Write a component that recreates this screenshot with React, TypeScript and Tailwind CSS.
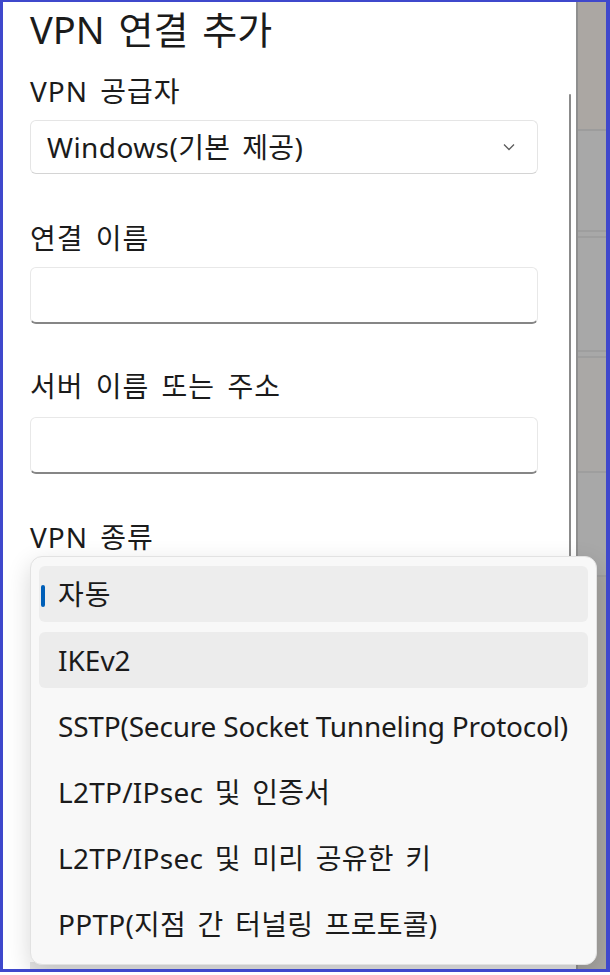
const options = [
  { text: 'IKEv2', track: '' },
  { text: 'SSTP(Secure Socket Tunneling Protocol)', track: 'tracking-[-0.2px] [word-spacing:0px]' },
  { text: 'L2TP/IPsec 및 인증서', track: 'tracking-[0.25px]' },
  { text: 'L2TP/IPsec 및 미리 공유한 키', track: 'tracking-[0.25px]' },
  { text: 'PPTP(지점 간 터널링 프로토콜)', track: 'tracking-[0.25px]' },
];

function Label({ children, className }: { children: React.ReactNode; className: string }) {
  return (
    <div className={`flex h-[38px] items-center text-[28px] tracking-[1px] [word-spacing:4px] text-[#1b1b1b] ${className}`}>
      {children}
    </div>
  );
}

function TextBox({ className }: { className: string }) {
  return (
    <div className={`h-[57px] w-[508px] rounded-[6px] border border-[#e8e8e8] border-b-2 border-b-[#868686] bg-white ${className}`} />
  );
}

export default function App() {
  return (
    <div className="h-[975px] w-[610px] bg-white [font-family:'Noto_Sans','Noto_Sans_CJK_KR',sans-serif] [word-spacing:4px]">
      <div className="relative flex h-[972px] w-[610px] overflow-hidden border-[#3f48cc] border-t-2 border-l-[3px] border-r-4 border-b-[3px]">
        {/* dialog page */}
        <div className="relative flex flex-1 flex-col bg-white pl-[27px]">
          <div className="flex h-[54px] items-center text-[38px] text-[#1b1b1b]">VPN 연결 추가</div>

          <Label className="mt-[16px]">VPN 공급자</Label>
          <div className="mt-[10px] flex h-[54px] w-[508px] items-center justify-between rounded-[6px] border border-[#e5e5e5] border-b-[#d4d4d4] bg-white pl-[16px] pr-[22px] text-[28px] tracking-[0.4px] text-[#1b1b1b]">
            <span>Windows(기본 제공)</span>
            <svg width="12" height="8" viewBox="0 0 12 8" fill="none">
              <path d="M1 1.5 6 6.5 11 1.5" stroke="#5c5c5c" strokeWidth="1.3" />
            </svg>
          </div>

          <Label className="mt-[45px]">연결 이름</Label>
          <TextBox className="mt-[10px]" />

          <Label className="mt-[43px]">서버 이름 또는 주소</Label>
          <TextBox className="mt-[12px]" />

          <Label className="mt-[44px]">VPN 종류</Label>
          <div className="mt-[10px] h-[54px] w-[508px] rounded-[6px] border border-[#e5e5e5] bg-white" />
          <div className="mt-[72px] h-[54px] w-[508px] rounded-[6px] border border-[#e5e5e5] bg-white" />
          <div className="mt-[90px] h-[57px] w-[508px] rounded-[6px] border border-[#e5e5e5] bg-white" />

          <div className="mt-auto h-[7px] w-full bg-[#e6e6e6]" />

          {/* scrollbar */}
          <div className="absolute right-[5px] top-[92px] h-[520px] w-[2px] rounded-full bg-[#8b8b8b]" />
        </div>

        {/* dimmed window behind */}
        <div className="flex w-[30px] flex-col border-l-2 border-[#8f8f8f] bg-[#a8a8a8]">
          <div className="h-[129px] border-b-2 border-[#9c9c9c] bg-[#aba7a3]" />
          <div className="h-[101px] border-b-2 border-[#9e9e9e]" />
          <div className="h-[6px] border-b-2 border-[#9e9e9e]" />
          <div className="h-[114px] border-b-2 border-[#9e9e9e]" />
          <div className="h-[6px] border-b-2 border-[#9e9e9e]" />
          <div className="h-[115px] border-b-2 border-[#9e9e9e] bg-[#aaa8a6]" />
          <div className="h-[104px] border-b-2 border-[#9e9e9e]" />
          <div className="flex-1 bg-[#a7a5a2]" />
        </div>

        {/* VPN type dropdown */}
        <div className="absolute left-[27px] top-[554px] w-[567px] rounded-[12px] border border-[#e2e2e2] bg-[#f8f8f8] px-[8px] pt-[9px] pb-[12px] shadow-[0_8px_24px_rgba(0,0,0,0.16)]">
          <div className="relative flex h-[56px] items-center rounded-[6px] bg-[#ededed] pl-[19px] text-[28px] tracking-[1px] text-[#1b1b1b]">
            <div className="absolute left-[2px] top-[19px] h-[22px] w-[4px] rounded-full bg-[#005fb8]" />
            자동
          </div>
          {options.map((o, i) => (
            <div
              key={o.text}
              className={`mt-[10px] flex h-[56px] items-center rounded-[6px] pl-[19px] text-[28px] text-[#1b1b1b] ${o.track} ${i === 0 ? 'bg-[#ececec]' : ''}`}
            >
              {o.text}
            </div>
          ))}
        </div>
      </div>
    </div>
  );
}
